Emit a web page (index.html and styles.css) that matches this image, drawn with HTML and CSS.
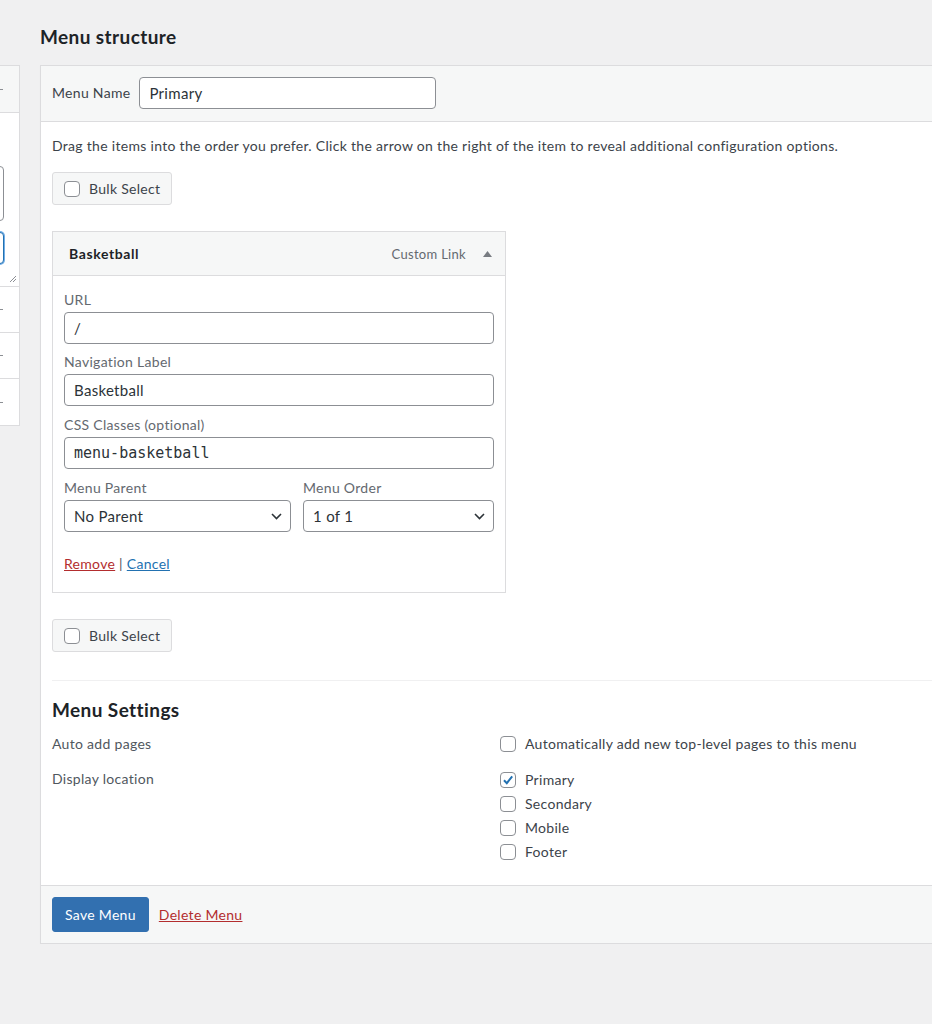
FILE: index.html
```html
<!DOCTYPE html>
<html lang="en">
<head>
  <meta charset="UTF-8">
  <meta name="viewport" content="width=device-width, initial-scale=1.0">
  <title>Menus</title>
  <link rel="stylesheet" href="styles.css">
</head>
<body>
  <div class="nav-menus">

    <!-- left column: add menu items (scrolled mostly out of view) -->
    <div class="col-left">
      <div class="side-box">
        <div class="side-head"><span class="side-arrow"></span></div>
        <div class="side-body">
          <div class="side-field tall"></div>
          <div class="side-field focused"></div>
          <div class="side-grip">
            <svg width="8" height="8" viewBox="0 0 8 8"><path d="M1 7 L7 1 M4 7 L7 4" stroke="#8c8f94" stroke-width="1"/></svg>
          </div>
        </div>
        <div class="side-row"><span class="side-arrow"></span></div>
        <div class="side-row"><span class="side-arrow"></span></div>
        <div class="side-row last"><span class="side-arrow"></span></div>
      </div>
    </div>

    <!-- right column: menu structure -->
    <div class="col-right">
      <h2 class="col-title">Menu structure</h2>
      <div class="menu-edit">
        <div class="menu-header">
          <label class="name-label">Menu Name</label>
          <div class="text-input name-input">Primary</div>
        </div>

        <div class="menu-body">
          <p class="drag-info">Drag the items into the order you prefer. Click the arrow on the right of the item to reveal additional configuration options.</p>

          <div class="bulk-btn"><span class="check"></span>Bulk Select</div>

          <div class="menu-item">
            <div class="item-bar">
              <span class="item-title">Basketball</span>
              <span class="item-type">Custom Link</span>
              <svg class="item-toggle" width="9" height="6" viewBox="0 0 9 6"><polygon points="4.5,0 9,6 0,6" fill="#787c82"/></svg>
            </div>
            <div class="item-settings">
              <div class="field">
                <div class="field-label">URL</div>
                <div class="text-input">/</div>
              </div>
              <div class="field">
                <div class="field-label">Navigation Label</div>
                <div class="text-input">Basketball</div>
              </div>
              <div class="field">
                <div class="field-label">CSS Classes (optional)</div>
                <div class="text-input mono">menu-basketball</div>
              </div>
              <div class="field-row">
                <div class="field">
                  <div class="field-label">Menu Parent</div>
                  <div class="select">No Parent
                    <svg width="11" height="7" viewBox="0 0 11 7"><path d="M1 1 L5.5 5.5 L10 1" fill="none" stroke="#2c3338" stroke-width="1.6"/></svg>
                  </div>
                </div>
                <div class="field">
                  <div class="field-label">Menu Order</div>
                  <div class="select">1 of 1
                    <svg width="11" height="7" viewBox="0 0 11 7"><path d="M1 1 L5.5 5.5 L10 1" fill="none" stroke="#2c3338" stroke-width="1.6"/></svg>
                  </div>
                </div>
              </div>
              <div class="item-actions">
                <a href="#" class="link-delete">Remove</a> | <a href="#" class="link-cancel">Cancel</a>
              </div>
            </div>
          </div>

          <div class="bulk-btn"><span class="check"></span>Bulk Select</div>

          <div class="menu-settings">
            <h3>Menu Settings</h3>
            <div class="setting">
              <div class="setting-name">Auto add pages</div>
              <div class="setting-input">
                <label class="opt"><span class="check"></span>Automatically add new top-level pages to this menu</label>
              </div>
            </div>
            <div class="setting">
              <div class="setting-name">Display location</div>
              <div class="setting-input">
                <label class="opt"><span class="check on"><svg width="14" height="14" viewBox="0 0 14 14"><path d="M3 7.3 L5.8 10.2 L11.2 3.4" fill="none" stroke="#2271b1" stroke-width="2"/></svg></span>Primary</label>
                <label class="opt"><span class="check"></span>Secondary</label>
                <label class="opt"><span class="check"></span>Mobile</label>
                <label class="opt"><span class="check"></span>Footer</label>
              </div>
            </div>
          </div>
        </div>

        <div class="menu-footer">
          <button class="btn-save">Save Menu</button>
          <a href="#" class="link-delete">Delete Menu</a>
        </div>
      </div>
    </div>

  </div>
</body>
</html>
```

FILE: styles.css
```css
* { box-sizing: border-box; }
html, body { overflow: hidden; }
body {
  margin: 0;
  background: #f0f0f1;
  color: #3c434a;
  font-family: 'Lato', 'Noto Sans', sans-serif;
  font-size: 14px;
  line-height: 20px;
  letter-spacing: 0.3px;
}

/* two columns, page scrolled to the right */
.nav-menus {
  display: flex;
  gap: 20px;
  margin-left: -261px;
  align-items: flex-start;
}
.col-title {
  margin: 25px 0 16px;
  font-size: 19px;
  line-height: 24px;
  font-weight: 700;
  letter-spacing: 0.4px;
  color: #1d2327;
}

/* left column */
.col-left { width: 281px; flex: none; padding-top: 65px; }
.side-box {
  background: #fff;
  border: 1px solid #dcdcde;
}
.side-head {
  height: 47px;
  background: #f6f7f7;
  border-bottom: 1px solid #dcdcde;
  display: flex;
  justify-content: flex-end;
  align-items: center;
  padding-right: 16px;
}
.side-arrow { width: 3px; height: 1px; background: #8c8f94; }
.side-body { padding: 53px 15px 1px 15px; }
.side-field {
  border: 1px solid #8c8f94;
  border-radius: 4px;
  background: #fff;
}
.side-field.tall { height: 55px; margin-bottom: 11px; }
.side-field.focused { height: 32px; border-color: #2271b1; box-shadow: 0 0 0 1px #72aee6; }
.side-grip { display: flex; justify-content: flex-end; margin: 11px -13px 0 0; height: 10px; }
.side-row {
  height: 46px;
  border-top: 1px solid #dcdcde;
  display: flex;
  justify-content: flex-end;
  align-items: center;
  padding-right: 16px;
}
.side-row.last { height: 47px; }

/* right column */
.col-right { width: 920px; flex: none; }
.menu-edit {
  background: #fff;
  border: 1px solid #dcdcde;
  box-shadow: 0 1px 1px rgba(0,0,0,0.04);
}
.menu-header {
  display: flex;
  align-items: center;
  gap: 9px;
  padding: 11px 11px 12px;
  background: #f6f7f7;
  border-bottom: 1px solid #dcdcde;
}
.name-label { color: #3c434a; }
.text-input {
  height: 32px;
  padding: 0 9px;
  border: 1px solid #8c8f94;
  border-radius: 4px;
  background: #fff;
  color: #2c3338;
  font-size: 15px;
  display: flex;
  align-items: center;
}
.text-input.mono { font-family: 'DejaVu Sans Mono', 'Liberation Mono', monospace; letter-spacing: 0; }
.name-input { width: 297px; }

.menu-body { padding: 0 11px 23px; }
.drag-info { margin: 14px 0 16px; }

.bulk-btn {
  display: flex;
  align-items: center;
  gap: 9px;
  width: max-content;
  height: 33px;
  padding: 0 11px;
  white-space: nowrap;
  background: #f6f7f7;
  border: 1px solid #dcdcde;
  border-radius: 3px;
}
.check {
  width: 16px;
  height: 16px;
  flex: none;
  border: 1px solid #8c8f94;
  border-radius: 4px;
  background: #fff;
  display: flex;
  align-items: center;
  justify-content: center;
}

/* single menu item, expanded */
.menu-item { width: 454px; margin: 26px 0; }
.item-bar {
  display: flex;
  align-items: center;
  height: 45px;
  padding: 0 13px 0 16px;
  background: #f6f7f7;
  border: 1px solid #dcdcde;
}
.item-title { font-weight: 700; color: #1d2327; flex: 1; letter-spacing: 0.6px; }
.item-type { color: #646970; font-size: 13px; margin-right: 17px; }
.item-settings {
  padding: 14px 11px 18px;
  border: 1px solid #dcdcde;
  border-top: none;
}
.field { margin-bottom: 9px; }
.field:first-child { margin-bottom: 8px; }
.field-label { color: #646970; margin-bottom: 2px; }
.field-row {
  display: grid;
  grid-template-columns: 227px 1fr;
  gap: 12px;
}
.select {
  height: 32px;
  padding: 0 8px 0 9px;
  border: 1px solid #8c8f94;
  border-radius: 4px;
  background: #fff;
  color: #2c3338;
  font-size: 15px;
  display: flex;
  align-items: center;
  justify-content: space-between;
}
.item-actions { margin-top: 13px; color: #50575e; }
.link-delete { color: #b32d2e; }
.link-cancel { color: #2271b1; }

/* settings */
.menu-settings {
  margin-top: 28px;
  border-top: 1px solid #f0f0f1;
  padding-top: 17px;
}
.menu-settings h3 {
  margin: 0 0 12px;
  font-size: 19px;
  line-height: 24px;
  letter-spacing: 0.4px;
  color: #1d2327;
}
.setting { display: flex; margin-bottom: 15px; }
.setting:last-child { margin-bottom: 0; }
.setting-name { width: 448px; color: #50575e; }
.setting-input { display: flex; flex-direction: column; gap: 4px; }
.opt { display: flex; align-items: center; gap: 9px; color: #3c434a; }
.setting:last-child .setting-input { margin-top: 1px; }

.menu-footer {
  display: flex;
  align-items: center;
  gap: 10px;
  padding: 11px;
  background: #f6f7f7;
  border-top: 1px solid #dcdcde;
}
.btn-save {
  height: 35px;
  padding: 0 12px;
  background: #3270b0;
  border: 1px solid #3270b0;
  border-radius: 3px;
  color: #fff;
  font-family: inherit;
  font-size: 14px;
  letter-spacing: 0.3px;
}
```
